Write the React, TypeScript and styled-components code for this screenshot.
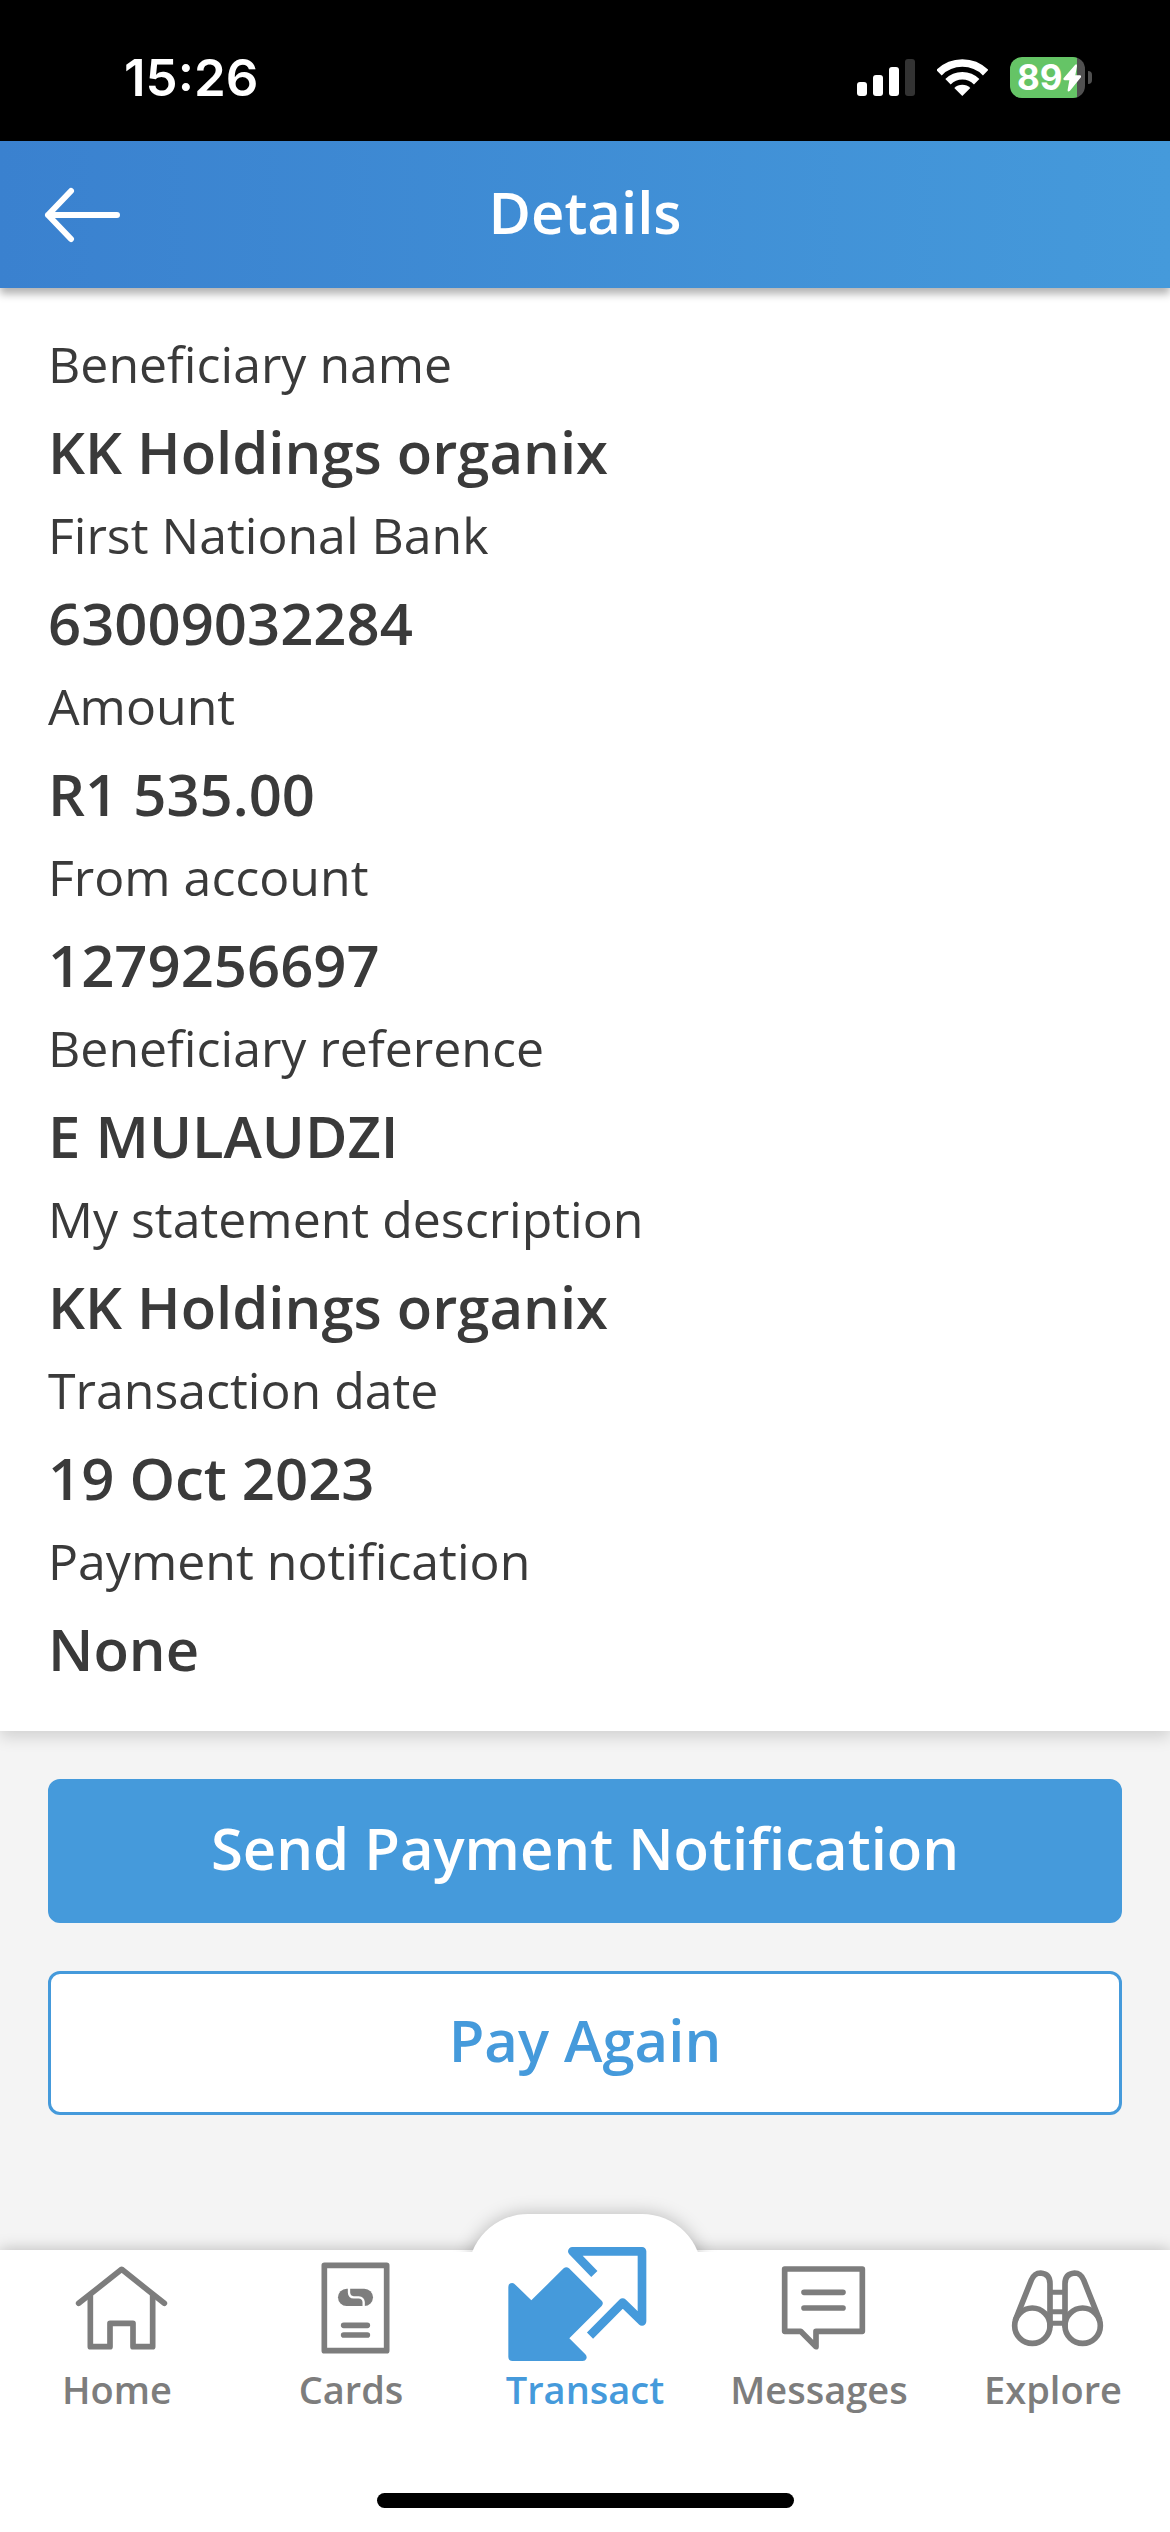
import React from "react";
import styled, { createGlobalStyle, css } from "styled-components";

const GlobalStyle = createGlobalStyle`
  *, *::before, *::after { box-sizing: border-box; }
  body {
    margin: 0;
    background: #f4f4f4;
    color: #3a3a3a;
    font-family: "Open Sans", "Noto Sans", sans-serif;
  }
  button { font-family: inherit; margin: 0; border: 0; cursor: pointer; }
`;

const BLUE = "#459adb";
const GREY = "#7d7d7d";

const Page = styled.div`
  display: flex;
  flex-direction: column;
  min-height: 100vh;
`;

const StatusBar = styled.div`
  display: flex;
  align-items: center;
  justify-content: space-between;
  height: 141px;
  padding: 14px 78px 0 124px;
  background: #000;
  color: #fff;
`;

const Clock = styled.time`
  font-family: Inter, sans-serif;
  font-size: 51px;
  font-weight: 600;
  line-height: 60px;
`;

const StatusIcons = styled.div`
  display: flex;
  align-items: center;
  gap: 22px;
`;

const Battery = styled.div`
  display: flex;
  align-items: center;
  gap: 3px;
`;

const BatteryBody = styled.div`
  display: flex;
  align-items: center;
  width: 75px;
  height: 41px;
  padding-left: 7px;
  border-radius: 12px;
  background: linear-gradient(90deg, #65c466 89%, #505050 89%);
  font-family: Inter, sans-serif;
  font-size: 35px;
  font-weight: 700;
  line-height: 41px;
`;

const BatteryTip = styled.div`
  width: 4px;
  height: 13px;
  border-radius: 0 4px 4px 0;
  background: #505050;
`;

const Header = styled.header`
  position: relative;
  z-index: 1;
  display: grid;
  grid-template-columns: 1fr auto 1fr;
  align-items: center;
  height: 147px;
  padding: 0 42px;
  background: linear-gradient(90deg, #3a81cf, ${BLUE});
  box-shadow: 0 6px 8px rgba(0, 0, 0, 0.3);
  color: #fff;
`;

const BackButton = styled.button`
  display: flex;
  justify-self: start;
  padding: 0;
  background: none;
  color: inherit;
`;

const Title = styled.h1`
  margin: 0;
  padding-bottom: 6px;
  font-size: 58px;
  font-weight: 600;
  line-height: 84px;
`;

const DetailsCard = styled.dl`
  margin: 0;
  padding: 36px 48px 39px;
  background: #fff;
  box-shadow: 0 6px 15px rgba(0, 0, 0, 0.15);
`;

const Detail = styled.div`
  display: flex;
  flex-direction: column;
  gap: 4px;
`;

const Label = styled.dt`
  font-size: 50px;
  line-height: 80px;
`;

const Value = styled.dd`
  margin: 0;
  font-size: 58px;
  font-weight: 600;
  line-height: 87px;
`;

const Actions = styled.div`
  display: flex;
  flex: 1;
  flex-direction: column;
  gap: 48px;
  padding: 48px;
`;

const ActionButton = styled.button<{ $outlined?: boolean }>`
  height: 144px;
  padding: 0 24px 6px;
  border: 3px solid ${BLUE};
  border-radius: 12px;
  background: ${(p) => (p.$outlined ? "#fff" : BLUE)};
  color: ${(p) => (p.$outlined ? BLUE : "#fff")};
  font-size: 58px;
  font-weight: 600;
  line-height: 84px;
`;

const Footer = styled.footer`
  display: flex;
  flex-direction: column;
  align-items: center;
  justify-content: space-between;
  height: 282px;
  padding-bottom: 24px;
  background: #fff;
  box-shadow: 0 0 15px rgba(0, 0, 0, 0.25);
`;

const Tabs = styled.nav`
  display: grid;
  grid-template-columns: repeat(5, 1fr);
  align-items: end;
  width: 100%;
`;

const raised = css`
  position: relative;
  isolation: isolate;
  height: 202px;
  margin-top: -36px;
  color: ${BLUE};

  &::before {
    content: "";
    position: absolute;
    z-index: -1;
    inset: 0 0 auto;
    height: 60px;
    border-radius: 60px 60px 0 0;
    background: #fff;
    box-shadow: 0 0 18px rgba(0, 0, 0, 0.25);
    clip-path: inset(-30px -30px 22px);
  }
`;

const Tab = styled.button<{ $active?: boolean }>`
  display: flex;
  flex-direction: column;
  align-items: center;
  justify-content: flex-end;
  height: 166px;
  padding: 0;
  background: none;
  color: ${GREY};
  font-size: 38px;
  font-weight: 600;
  line-height: 54px;
  ${(p) => p.$active && raised}
`;

const HomeIndicator = styled.div`
  width: 417px;
  height: 15px;
  border-radius: 8px;
  background: #000;
`;

const SignalIcon = () => (
  <svg width="58" height="37" viewBox="0 0 58 37" fill="#fff" aria-hidden="true">
    <rect x="0" y="23" width="10" height="14" rx="3" />
    <rect x="16" y="16" width="10" height="21" rx="3" />
    <rect x="32" y="8" width="10" height="29" rx="3" />
    <rect x="48" y="0" width="10" height="37" rx="3" fill="#333" />
  </svg>
);

const WifiIcon = () => (
  <svg width="51" height="37" viewBox="318 57 153 111" fill="none" stroke="#fff" aria-hidden="true">
    <path d="M324 98A99 99 0 0 1 464 98" strokeWidth="23" />
    <path d="M351 125A61 61 0 0 1 437 125" strokeWidth="23" />
    <path d="M394 168L370 144A34 34 0 0 1 418 144Z" fill="#fff" stroke="none" />
  </svg>
);

const BoltIcon = () => (
  <svg width="18" height="28" viewBox="693 75 54 82" fill="#fff" aria-hidden="true">
    <path d="M729 77Q735 72 735 80L730 108H744Q750 110 745 116L714 154Q706 160 707 151L712 123H698Q691 121 696 115Z" />
  </svg>
);

const BackIcon = () => (
  <svg width="82" height="56" viewBox="0 0 82 56" fill="none" stroke="#fff" strokeWidth="6" strokeLinecap="round" strokeLinejoin="round" aria-hidden="true">
    <path d="M75 28H6M29 4L6 28L29 52" />
  </svg>
);

const TabIcon = styled.svg.attrs({
  fill: "none",
  stroke: "currentColor",
  strokeWidth: 17,
  strokeLinecap: "round",
  strokeLinejoin: "round",
  "aria-hidden": true,
})`
  width: 100px;
  height: 102px;
  overflow: visible;
`;

const TransactSvg = styled.svg`
  width: 160px;
  height: 117px;
`;

const HomeIcon = () => (
  <TabIcon viewBox="201 177 300 306">
    <path d="M236 307L365 205L493 307" />
    <path d="M271 284V437H330V367H399V437H458V284" />
  </TabIcon>
);

const CardsIcon = () => (
  <TabIcon viewBox="903 177 300 306">
    <rect x="973" y="193" width="187" height="256" />
    <path d="M1031 373H1102M1031 402H1102" />
    <rect x="1014" y="263" width="105" height="52" rx="26" fill="currentColor" stroke="none" />
    <path d="M1047 260V275Q1048 289 1061 289H1076Q1090 290 1091 303V318" stroke="#fff" strokeWidth="7" />
  </TabIcon>
);

const TransactIcon = () => (
  <TransactSvg viewBox="195 162 480 351" aria-hidden="true">
    <path
      fill="currentColor"
      d="M205 288Q205 276 217 276Q222 276 226 281L274 328L371 232Q379 225 387 232L485 329Q492 337 485 345L388 442L436 490Q442 497 439 503Q436 510 428 510H218Q205 510 205 498Z"
    />
    <path fill="none" stroke="currentColor" strokeWidth="26" strokeLinejoin="round" d="M463 249L397 181H606V391L548 335L450 434" />
  </TransactSvg>
);

const MessagesIcon = () => (
  <TabIcon viewBox="177 87 300 306">
    <path d="M224 114H457V301H318V347L272 301H224Z" />
    <path d="M282 184H399M282 231H399" />
  </TabIcon>
);

const ExploreIcon = () => (
  <TabIcon viewBox="879 87 300 306">
    <circle cx="967" cy="284" r="53" />
    <circle cx="1118" cy="284" r="53" />
    <path d="M917 265L964 147Q973 126 992 126Q1020 128 1020 158V284" />
    <path d="M1168 265L1121 147Q1112 126 1094 126Q1065 128 1065 158V284" />
    <path d="M1022 184H1063M1022 242H1063M1022 277H1063" strokeWidth="15" />
  </TabIcon>
);

const details = [
  ["Beneficiary name", "KK Holdings organix"],
  ["First National Bank", "63009032284"],
  ["Amount", "R1 535.00"],
  ["From account", "1279256697"],
  ["Beneficiary reference", "E MULAUDZI"],
  ["My statement description", "KK Holdings organix"],
  ["Transaction date", "19 Oct 2023"],
  ["Payment notification", "None"],
];

const tabs = [
  { name: "Home", Icon: HomeIcon },
  { name: "Cards", Icon: CardsIcon },
  { name: "Transact", Icon: TransactIcon, active: true },
  { name: "Messages", Icon: MessagesIcon },
  { name: "Explore", Icon: ExploreIcon },
];

export default function App() {
  return (
    <Page>
      <GlobalStyle />
      <StatusBar>
        <Clock>15:26</Clock>
        <StatusIcons>
          <SignalIcon />
          <WifiIcon />
          <Battery>
            <BatteryBody>
              89
              <BoltIcon />
            </BatteryBody>
            <BatteryTip />
          </Battery>
        </StatusIcons>
      </StatusBar>
      <Header>
        <BackButton type="button" aria-label="Back">
          <BackIcon />
        </BackButton>
        <Title>Details</Title>
      </Header>
      <DetailsCard>
        {details.map(([label, value]) => (
          <Detail key={label}>
            <Label>{label}</Label>
            <Value>{value}</Value>
          </Detail>
        ))}
      </DetailsCard>
      <Actions>
        <ActionButton type="button">Send Payment Notification</ActionButton>
        <ActionButton type="button" $outlined>
          Pay Again
        </ActionButton>
      </Actions>
      <Footer>
        <Tabs>
          {tabs.map(({ name, Icon, active }) => (
            <Tab key={name} type="button" $active={active} aria-current={active ? "page" : undefined}>
              <Icon />
              {name}
            </Tab>
          ))}
        </Tabs>
        <HomeIndicator />
      </Footer>
    </Page>
  );
}
